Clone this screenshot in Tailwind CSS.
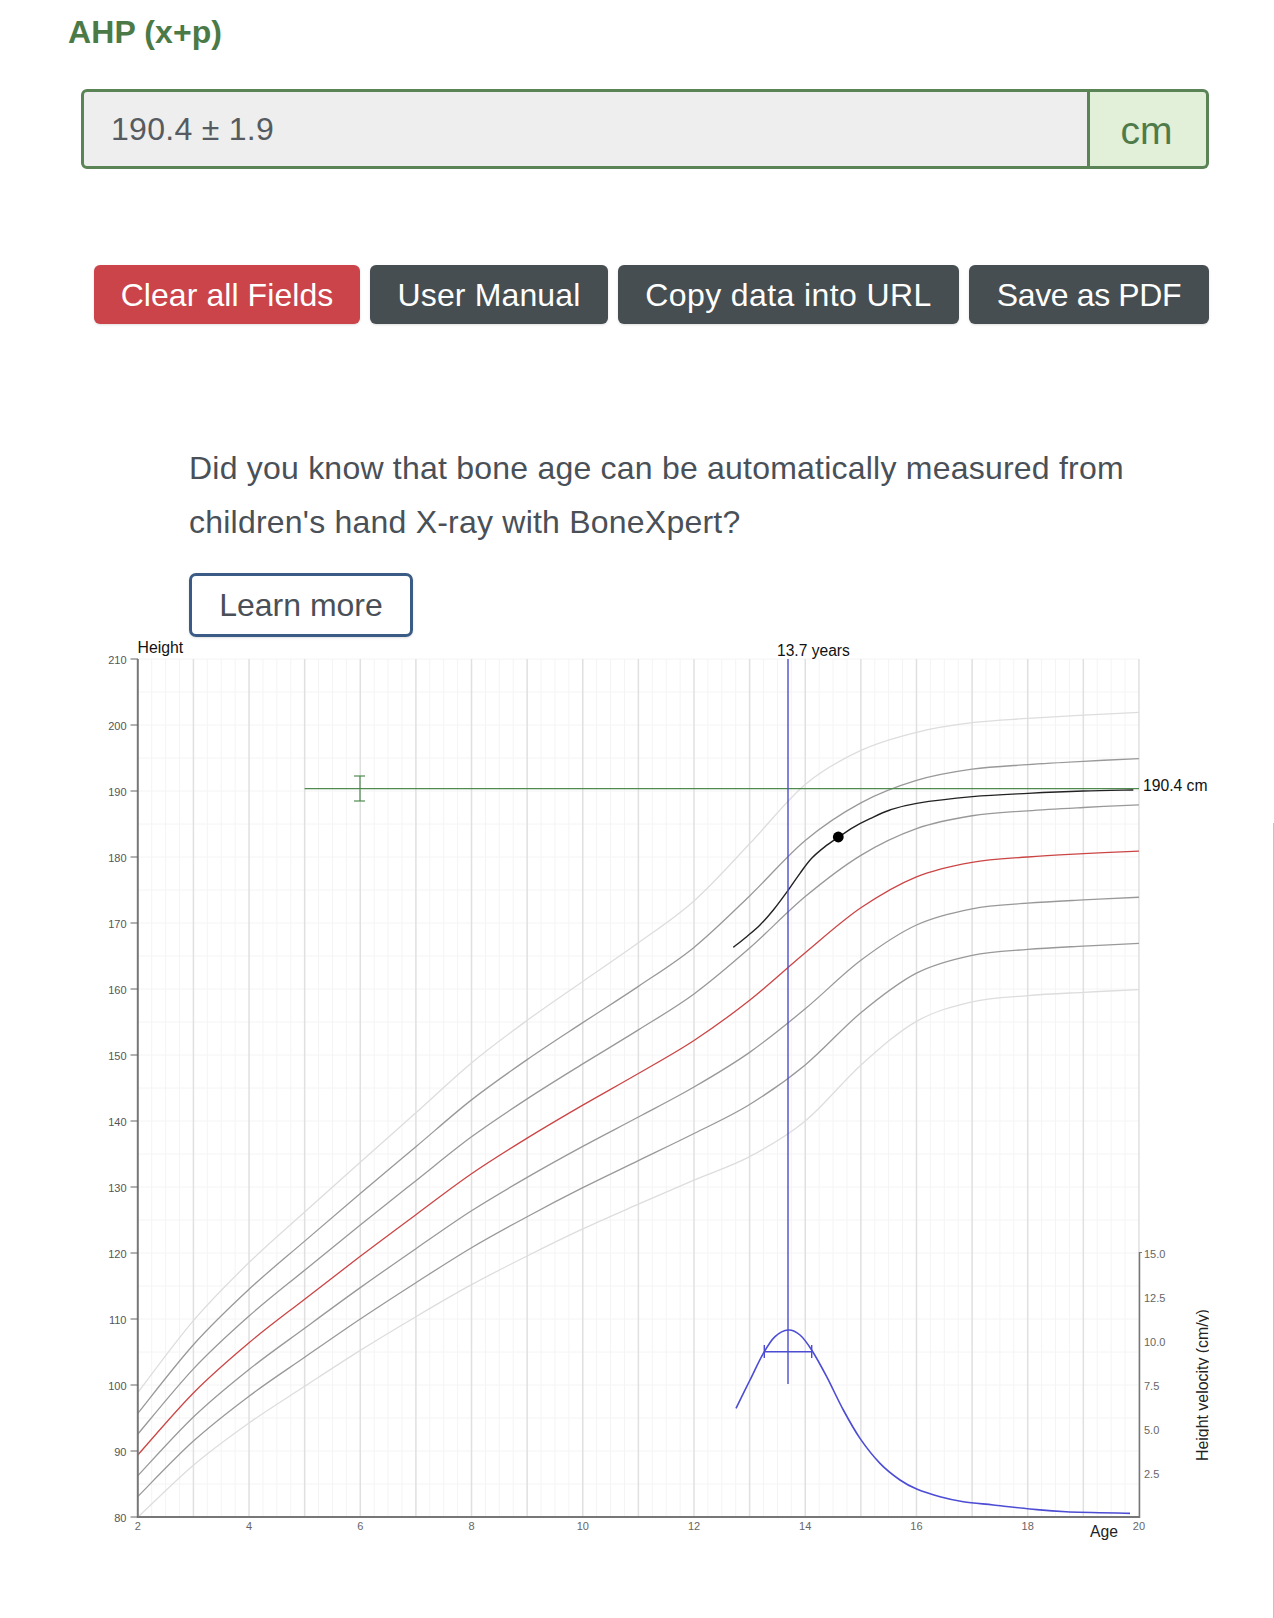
<!DOCTYPE html>
<html lang="en">
<head>
  <meta charset="UTF-8">
  <meta name="viewport" content="width=device-width, initial-scale=1.0">
  <title>AHP growth chart</title>
  <script src="https://cdn.jsdelivr.net/npm/@tailwindcss/browser@4"></script>
</head>
<body class="relative bg-white w-[1274px] h-[1618px] overflow-hidden font-['Liberation_Sans',Arial,sans-serif] text-[#495057]">
  <h1 class="ml-[68px] pt-[13px] h-[64px] text-[32px] leading-[38px] font-bold tracking-[0.1px] text-[#4b7a47]">AHP (x+p)</h1>

  <div class="flex ml-[81px] mt-[25px] w-[1128px] h-[80px] text-[32px]">
    <div class="flex-1 flex items-center pl-[27px] bg-[#eeeeee] border-[3px] border-[#5a8356] rounded-l-[6px] text-[#555b60] tracking-[0.28px]">190.4 ± 1.9</div>
    <div class="w-[119px] flex items-center justify-center pt-[4px] pr-[3px] bg-[#e2efd9] border-[3px] border-l-0 border-[#5a8356] rounded-r-[6px] text-[39px] text-[#4f7b4a]">cm</div>
  </div>

  <div class="flex justify-end gap-[10px] w-[1209px] mt-[96px] text-[32px] text-white">
    <button class="h-[59px] w-[266px] bg-[#cb444a] rounded-[6px] shadow-sm tracking-[0.07px]">Clear all Fields</button>
    <button class="h-[59px] w-[238px] bg-[#464e52] rounded-[6px] shadow-sm tracking-[0.15px]">User Manual</button>
    <button class="h-[59px] w-[341px] bg-[#464e52] rounded-[6px] shadow-sm tracking-[0.4px]">Copy data into URL</button>
    <button class="h-[59px] w-[240px] bg-[#464e52] rounded-[6px] shadow-sm tracking-[-0.37px]">Save as PDF</button>
  </div>

  <p class="ml-[189px] mt-[117px] w-[1000px] text-[32px] leading-[54px] tracking-[0.22px]">Did you know that bone age can be automatically measured from<br>children's hand X-ray with BoneXpert?</p>
  <button class="block ml-[189px] mt-[24px] h-[64px] w-[224px] border-[3px] border-[#3b5b87] rounded-[7px] text-[32px] text-[#495057] shadow-sm">Learn more</button>

  <svg id="chart" class="block" width="1274" height="981" viewBox="0 637 1274 981" font-family="'Liberation Sans', Arial, sans-serif"></svg>

  <!-- scrollbar edge -->
  <div class="absolute right-0 top-[823px] bottom-0 w-px bg-[#c4c4c4]"></div>

  <script>
    const svg = document.getElementById('chart');
    const X = age => 137.8 + (age - 2) * 55.62;
    const Y = h => 1517 - (h - 80) * 6.6;

    function add(tag, attrs, text, parent) {
      const el = document.createElementNS('http://www.w3.org/2000/svg', tag);
      for (const k in attrs) el.setAttribute(k, attrs[k]);
      if (text) el.textContent = text;
      (parent || svg).appendChild(el);
      return el;
    }
    const line = (x1, y1, x2, y2, stroke, w) => add('line', { x1, y1, x2, y2, stroke, 'stroke-width': w });
    const label = (x, y, text, size, fill, anchor) => add('text', { x, y, 'font-size': size, fill, 'text-anchor': anchor || 'start' }, text);

    // smooth path through the points
    function smooth(pts) {
      let d = `M${pts[0][0]} ${pts[0][1]}`;
      for (let i = 0; i < pts.length - 1; i++) {
        const p0 = pts[i - 1] || pts[i], p1 = pts[i], p2 = pts[i + 1], p3 = pts[i + 2] || p2;
        const c1x = p1[0] + (p2[0] - p0[0]) / 6, c1y = p1[1] + (p2[1] - p0[1]) / 6;
        const c2x = p2[0] - (p3[0] - p1[0]) / 6, c2y = p2[1] - (p3[1] - p1[1]) / 6;
        d += `C${c1x} ${c1y} ${c2x} ${c2y} ${p2[0]} ${p2[1]}`;
      }
      return d;
    }
    const curve = (pts, stroke, w) => add('path', { d: smooth(pts), fill: 'none', stroke, 'stroke-width': w });

    // grid
    for (let a = 2; a < 20; a += 0.25) {
      if (a % 1) line(X(a), 659, X(a), 1517, '#f4f4f4', 1);
    }
    for (let h = 85; h <= 210; h += 5) line(138, Y(h), X(20), Y(h), '#f4f4f4', 1);
    for (let a = 3; a <= 20; a++) line(X(a), 659, X(a), 1517, '#e0e0e0', 1.5);

    // reference curves, one knot per year
    const mean = [89.4, 98.8, 106.4, 113, 119.5, 125.8, 132, 137.4, 142.4, 147.2, 152.2, 158.3, 165.5, 172.3, 177, 179.2, 180, 180.5, 180.9];
    const sd = [3.15, 3.65, 4.05, 4.4, 4.75, 5.15, 5.6, 5.95, 6.25, 6.6, 7.05, 7.9, 8.5, 7.95, 7.3, 7.05, 7, 7, 7];
    for (const [k, color] of [[3, '#dddddd'], [-3, '#dddddd'], [2, '#999999'], [1, '#999999'], [-1, '#999999'], [-2, '#999999'], [0, '#cc4545']]) {
      curve(mean.map((m, i) => [X(i + 2), Y(m + k * sd[i])]), color, 1.3);
    }

    // axes
    line(137.8, 659, 137.8, 1518, '#777777', 2);
    line(137, 1517, 1140, 1517, '#777777', 2);
    line(1139.5, 1252, 1139.5, 1518, '#777777', 1.5);
    line(1139.5, 1252.5, 1142, 1252.5, '#777777', 1);

    for (let h = 80; h <= 210; h += 10) {
      line(130.5, Y(h), 138, Y(h), '#666666', 1);
      label(126.5, Y(h) + 4.5, String(h), 11, '#555555', 'end');
    }
    for (let a = 2; a <= 20; a += 2) label(X(a), 1530, String(a), 11, '#666666', 'middle');
    ['15.0', '12.5', '10.0', '7.5', '5.0', '2.5'].forEach((t, i) => label(1144, 1258 + i * 44, t, 11, '#666666'));

    label(137.5, 653, 'Height', 15.8, '#111111');
    label(777, 656, '13.7 years', 15.6, '#111111');
    label(1143, 791, '190.4 cm', 15.7, '#111111');
    label(1090, 1536.5, 'Age', 15.7, '#222222');

    // rotated label, descenders cut off at the edge as in the source
    const clip = add('clipPath', { id: 'vclip' });
    add('rect', { x: 1190, y: 1290, width: 18.8, height: 190 }, null, clip);
    const g = add('g', { 'clip-path': 'url(#vclip)' });
    add('text', { 'font-size': 15.9, fill: '#222222', transform: 'translate(1208 1461) rotate(-90)' }, 'Height velocity (cm/y)', g);

    // predicted height line
    line(X(5), 788.7, 1139, 788.7, '#4f8a4f', 1.2);
    line(360, 776, 360, 801, '#4f8a4f', 1.2);
    line(354, 776, 365, 776, '#4f8a4f', 1.2);
    line(354, 801, 365, 801, '#4f8a4f', 1.2);

    // patient curve
    const patient = [[10, 412], [50, 380], [90, 345], [130, 300], [175, 240], [210, 190], [245, 145], [285, 110], [325, 82], [370, 52], [420, 26]]
      .map(p => [730 + p[0] / 3, 810 + p[1] / 3])
      .concat([[510, 540], [590, 520], [757, 500], [924, 490], [1090, 483], [1240, 480]].map(p => [720 + p[0] / 3, 630 + p[1] / 3]));
    curve(patient, '#222222', 1.4);
    add('circle', { cx: 838.3, cy: 837, r: 5.4, fill: '#000000' });

    // velocity curve
    const blue = '#4c4cd4';
    line(788, 659, 788, 1384, blue, 1.4);
    const velocity = [[18, 265], [60, 180], [100, 100], [135, 50], [175, 30], [210, 45], [245, 90], [290, 170], [340, 270], [390, 355], [450, 430], [510, 480], [560, 507], [630, 530], [700, 545], [790, 555], [900, 567], [1008, 575.4], [1200, 580]]
      .map(p => [730 + p[0] / 3, 1320 + p[1] / 3]);
    curve(velocity, blue, 1.6);
    line(764.3, 1351.7, 811.7, 1351.7, blue, 1.4);
    line(764.3, 1345, 764.3, 1358, blue, 1.4);
    line(811.7, 1345, 811.7, 1358, blue, 1.4);
  </script>
</body>
</html>
